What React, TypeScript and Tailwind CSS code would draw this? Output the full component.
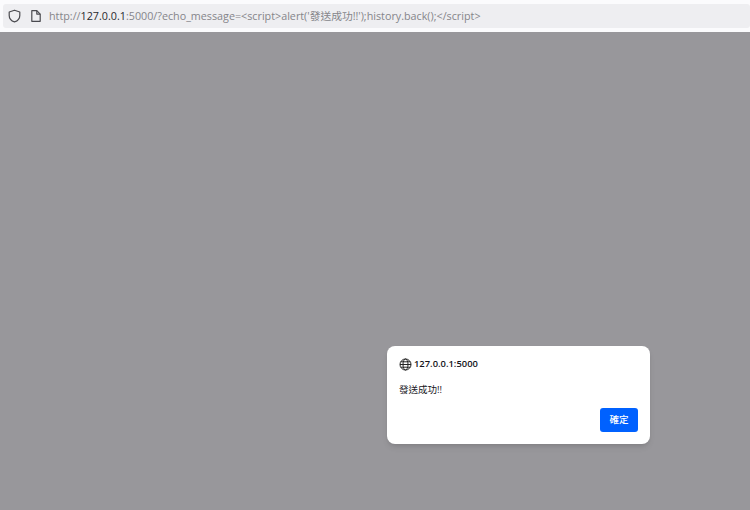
import React from "react";

const cjk = "font-['Open_Sans','Noto_Sans_CJK_TC',sans-serif]";

const ShieldIcon = () => (
  <svg width="13" height="14" viewBox="0 0 13 14" fill="none" stroke="#4a4a4f" strokeWidth="1.2">
    <path d="M6.500 1.200 11.800 3v3.400c0 3.200-2.100 5.400-5.300 6.500C3.300 11.800 1.200 9.600 1.200 6.400V3z" strokeLinejoin="round" />
  </svg>
);

const PageIcon = () => (
  <svg width="12" height="14" viewBox="0 0 12 14" fill="none" stroke="#4a4a4f" strokeWidth="1.2">
    <path d="M1.800 1.700h5l3.400 3.400v7.200H1.800z" strokeLinejoin="round" />
    <path d="M6.800 1.700v3.400h3.400" strokeLinejoin="round" />
  </svg>
);

const GlobeIcon = () => (
  <svg width="13" height="13" viewBox="0 0 13 13" fill="none" stroke="#222" strokeWidth="1">
    <circle cx="6.500" cy="6.500" r="5.500" />
    <ellipse cx="6.500" cy="6.500" rx="2.500" ry="5.500" />
    <path d="M1 6.500h11M1.800 3.800h9.400M1.800 9.200h9.400" />
  </svg>
);

export default function App() {
  return (
    <div className={`flex h-[510px] w-[750px] flex-col overflow-hidden bg-[#98979b] ${cjk}`}>
      <div className="h-[32px] bg-[#fbfbfd] pt-[4px] pb-[4px] pl-[3px]">
        <div className="flex h-[24px] items-center rounded-[3px] bg-[#eeeef1] pl-[5px] text-[10.75px] text-[#85858a]">
          <ShieldIcon />
          <span className="ml-[9px]">
            <PageIcon />
          </span>
          <span className="ml-[7px] whitespace-nowrap">
            http://<span className="text-[#2a2a2e]">127.0.0.1</span>:5000/?echo_message=&lt;script&gt;alert('發送成功!!');history.back();&lt;/script&gt;
          </span>
        </div>
      </div>

      <div className="pl-[387px] pt-[314px]">
        <div className="flex h-[98px] w-[263px] flex-col rounded-[8px] bg-white px-3 pt-[11px] shadow-md">
          <div className="flex items-center gap-[2px] text-[9.4px] font-semibold leading-[14px] text-[#15141a]">
            <GlobeIcon />
            <span>127.0.0.1:5000</span>
          </div>
          <p className="mt-[12px] text-[9.5px] leading-[14px] text-[#15141a]">發送成功!!</p>
          <div className="mt-[11px] flex justify-end">
            <button className="h-[24px] w-[38px] rounded-[3px] bg-[#0061ff] text-[9.5px] font-medium text-white">
              確定
            </button>
          </div>
        </div>
      </div>
    </div>
  );
}
